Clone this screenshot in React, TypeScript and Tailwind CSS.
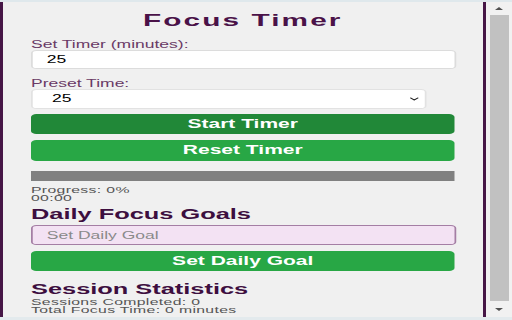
import { ChevronDown } from "lucide-react";

const font = { fontFamily: '"Liberation Sans", Arial, sans-serif' };

export default function App() {
  return (
    <div className="w-[512px] h-[320px] overflow-hidden bg-[#f0f0f0] flex flex-col" style={font}>
      <div className="h-[2px] bg-[#dfe8ec] shrink-0" />
      <div className="flex flex-1 min-h-0">
        {/* left frame */}
        <div className="w-[3px] bg-[#461646] shrink-0" />

        {/* popup content, rendered narrow and stretched like the capture */}
        <div className="w-[480px] overflow-hidden shrink-0">
          <div className="w-[274px] origin-top-left scale-x-[1.75] px-4 flex flex-col">
            <h1 className="mt-[9px] h-[20px] leading-[20px] text-center text-[17px] font-bold tracking-[1.2px] text-[#4a1248]">
              Focus Timer
            </h1>

            <label className="mt-[8px] text-[10px] leading-[11px] text-[#6a3a66]">Set Timer (minutes):</label>
            <input
              defaultValue="25"
              className="-mr-px h-[19px] bg-white border border-[#dcdcdc] rounded-[3px] pl-[8px] text-[10px] text-black outline-none"
            />

            <label className="mt-[9px] text-[10px] leading-[11px] text-[#6a3a66]">Preset Time:</label>
            <div className="relative w-[226px] h-[20px]">
              <select className="block w-full h-[20px] appearance-none bg-white border border-[#e2e2e2] rounded-[3px] pl-[11px] text-[10px] leading-[18px] text-black outline-none">
                <option>25</option>
              </select>
              <ChevronDown className="absolute right-[3px] top-[6px] w-[8px] h-[8px] text-[#222]" strokeWidth={3} />
            </div>

            <button className="mt-[5px] h-[20px] rounded-[3px] bg-[#218838] text-white text-[12px] font-bold leading-[20px]">
              Start Timer
            </button>
            <button className="mt-[6px] h-[21px] rounded-[3px] bg-[#28a745] text-white text-[12px] font-bold leading-[21px]">
              Reset Timer
            </button>

            <div className="mt-[10px] h-[10px] bg-[#808080]" />

            <div className="mt-[6px] text-[9px] leading-[7.5px] tracking-[0.2px] text-[#555]">
              <div>Progress: 0%</div>
              <div>00:00</div>
            </div>

            <h2 className="mt-[4px] text-[14.5px] leading-[16px] font-bold text-[#3d0e3f]">Daily Focus Goals</h2>

            <input
              placeholder="Set Daily Goal"
              className="-mr-px mt-[3px] h-[20px] bg-[#f3e2f3] border border-[#a47ea4] rounded-[3px] pl-[8px] text-[10px] placeholder:text-[#8a8a8a] outline-none"
            />
            <button className="mt-[6px] h-[20px] rounded-[3px] bg-[#28a745] text-white text-[12px] font-bold leading-[20px]">
              Set Daily Goal
            </button>

            <h2 className="mt-[10px] text-[14.5px] leading-[16px] font-bold text-[#3d0e3f]">Session Statistics</h2>
            <div className="mt-[2px] text-[9px] leading-[7.5px] tracking-[0.2px] text-[#555]">
              <div>Sessions Completed: 0</div>
              <div>Total Focus Time: 0 minutes</div>
            </div>
          </div>
        </div>

        {/* right frame */}
        <div className="w-[3px] bg-[#461646] shrink-0" />

        {/* scrollbar */}
        <div className="flex-1 bg-[#f1f1f1] flex flex-col items-center">
          <div className="h-[13px] flex items-center justify-center">
            <div className="w-0 h-0 border-l-[4px] border-r-[4px] border-b-[3px] border-l-transparent border-r-transparent border-b-[#505050]" />
          </div>
          <div className="w-[19px] flex-1 bg-[#c1c1c1]" />
          <div className="h-[16px] flex items-center justify-center">
            <div className="w-0 h-0 border-l-[4px] border-r-[4px] border-t-[3px] border-l-transparent border-r-transparent border-t-[#505050]" />
          </div>
        </div>
      </div>
      <div className="h-[3px] bg-[#e3eaed] shrink-0" />
    </div>
  );
}
